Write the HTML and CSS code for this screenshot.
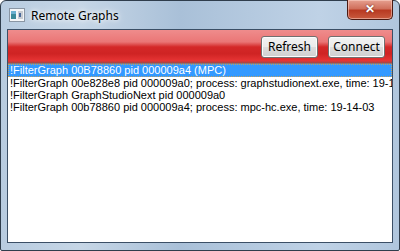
FILE: index.html
```html
<!DOCTYPE html>
<html lang="en">
<head>
    <meta charset="UTF-8">
    <title>Remote Graphs</title>
    <link rel="stylesheet" href="styles.css">
</head>
<body>
    <div class="window">
        <div class="titlebar">
            <svg class="appicon" width="16" height="14" viewBox="0 0 16 14">
                <rect x="0.5" y="0.5" width="15" height="13" fill="#f4f6f8" stroke="#8a96a4"/>
                <rect x="2" y="3" width="5" height="8" fill="#3a8a9a"/>
                <rect x="2" y="3" width="5" height="3" fill="#6ab0d0"/>
                <rect x="9" y="3" width="5" height="8" fill="#c8ccd2"/>
                <rect x="10" y="5" width="2" height="4" fill="#4a6a9a"/>
            </svg>
            <span class="title">Remote Graphs</span>
            <span class="closebtn">&#x2715;</span>
        </div>
        <div class="client">
            <div class="toolbar">
                <span class="button">Refresh</span>
                <span class="button">Connect</span>
            </div>
            <ul class="list">
                <li class="selected">!FilterGraph 00B78860 pid 000009a4 (MPC)</li>
                <li>!FilterGraph 00e828e8 pid 000009a0; process: graphstudionext.exe, time: 19-14-03</li>
                <li>!FilterGraph GraphStudioNext pid 000009a0</li>
                <li>!FilterGraph 00b78860 pid 000009a4; process: mpc-hc.exe, time: 19-14-03</li>
            </ul>
        </div>
    </div>
</body>
</html>
```
FILE: styles.css
```css
* {
    box-sizing: border-box;
}
body {
    margin: 0;
    width: 400px;
    height: 251px;
    overflow: hidden;
    background: #fff;
}
.window {
    width: 400px;
    height: 251px;
    border: 1px solid #2f3d4c;
    border-radius: 6px 6px 2px 2px;
    background: linear-gradient(90deg, #b8cce0 0%, #c6d6e6 20%, #a9c0d8 45%, #bfd2e6 80%, #b0c6dd 100%);
    display: flex;
    flex-direction: column;
    font-family: "Liberation Sans", Arial, sans-serif;
}
.titlebar {
    height: 28px;
    display: flex;
    align-items: flex-start;
    padding-left: 8px;
    position: relative;
}
.appicon {
    margin-top: 7px;
}
.title {
    margin-left: 6px;
    margin-top: 6px;
    font-family: "Noto Sans", "Liberation Sans", sans-serif;
    font-size: 12px;
    color: #000;
    text-shadow: 0 0 8px #fff, 0 0 4px #fff;
}
.closebtn {
    position: absolute;
    top: -1px;
    right: 6px;
    width: 46px;
    height: 20px;
    border: 1px solid #4a1a12;
    border-top: none;
    border-radius: 0 0 5px 5px;
    background: linear-gradient(#e6a090 0%, #d0705c 45%, #b83a22 55%, #c85a3e 100%);
    box-shadow: inset 0 0 0 1px rgba(255, 220, 210, 0.5);
    color: #fff;
    font-size: 12px;
    font-weight: bold;
    text-align: center;
    line-height: 18px;
    text-shadow: 0 0 2px #5a1a10;
}
.client {
    flex: 1;
    margin: 0 6px 7px 6px;
    border: 1px solid #3b4f66;
    background: #fff;
    display: flex;
    flex-direction: column;
}
.toolbar {
    height: 34px;
    display: flex;
    justify-content: flex-end;
    align-items: center;
    gap: 10px;
    padding-right: 7px;
    background: linear-gradient(#ef8c8c 0%, #ea7676 35%, #d42828 50%, #cf2424 70%, #e63434 90%, #a04848 97%, #7aa0a0 100%);
}
.button {
    width: 57px;
    height: 22px;
    border: 1px solid #707070;
    border-radius: 3px;
    background: linear-gradient(#f2f2f2 0%, #ebebeb 50%, #dddddd 51%, #cfcfcf 100%);
    box-shadow: inset 0 0 0 1px #fcfcfc;
    font-family: "Noto Sans", "Liberation Sans", sans-serif;
    font-size: 12px;
    color: #000;
    text-align: center;
    line-height: 20px;
}
.list {
    list-style: none;
    margin: 0;
    padding: 0;
    flex: 1;
    overflow: hidden;
    font-size: 11px;
    color: #000;
}
.list li {
    height: 12px;
    line-height: 12px;
    padding-left: 2px;
    white-space: nowrap;
}
.list li.selected {
    height: 13px;
    line-height: 13px;
    background: #3399ff;
    color: #fff;
    outline: 1px dotted #c0a060;
    outline-offset: -1px;
}
```
